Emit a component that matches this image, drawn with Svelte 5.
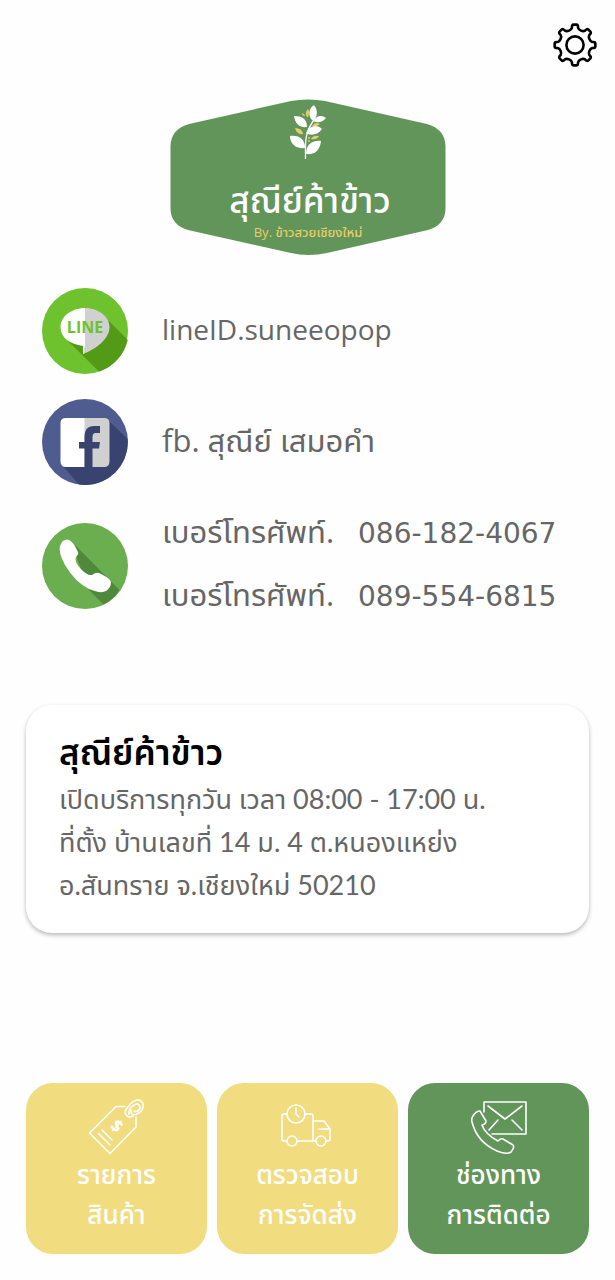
<script>
  const point = (radius, degrees) => {
    const a = ((degrees - 90) * Math.PI) / 180;
    return `${(24 + radius * Math.cos(a)).toFixed(2)} ${(24 + radius * Math.sin(a)).toFixed(2)}`;
  };

  // Eight rounded teeth joined by concave notches.
  const gearPath =
    Array.from({ length: 8 }, (_, i) => {
      const a = i * 45;
      return `${i ? 'L' : 'M'}${point(17.5, a - 10)} Q${point(20.6, a - 9)} ${point(20.4, a - 4)} L${point(20.4, a + 4)} Q${point(20.6, a + 9)} ${point(17.5, a + 10)} C${point(15.2, a + 14)} ${point(15.2, a + 31)} ${point(17.5, a + 35)}`;
    }).join(' ') + 'Z';

  const phones = ['086-182-4067', '089-554-6815'];

  const tabs = [
    { icon: 'tag', lines: ['รายการ', 'สินค้า'], active: false },
    { icon: 'truck', lines: ['ตรวจสอบ', 'การจัดส่ง'], active: false },
    { icon: 'contact', lines: ['ช่องทาง', 'การติดต่อ'], active: true }
  ];
</script>

<div class="page">
  <header>
    <button class="settings" type="button" aria-label="ตั้งค่า">
      <svg viewBox="0 0 48 48" fill="none" stroke="#000" stroke-width="2.6" stroke-linejoin="round">
        <path d={gearPath} />
        <circle cx="24" cy="24" r="8.6" />
      </svg>
    </button>
  </header>

  <svg class="logo" viewBox="0 0 276 158">
    <path fill="#62955a" d="M19 25 L121 2 Q138 -1 155 2 L257 25 Q275 30 275.500 47 L275.500 110 Q275 126 258 131 L157 154 Q138 158 121 154 L18 131 Q1 126 .5 110 L.5 47 Q1 30 19 25Z" />
    <g fill="#fff">
      <path d="M135.500 60 C135.500 45 134 34 144 21" fill="none" stroke="#fff" stroke-width="1.300" />
      <path d="M143 22 C137 17 139 9 144 6 C148 11 148 18 143 22Z" />
      <path d="M143 22 C147 16 152 16 156 19 C152 24 147 24 143 22Z" />
      <path d="M137 28 C129 29 125 24 124 17 C132 17 137 20 137 28Z" />
      <path d="M136 34 C141 25 148 26 152 30 C148 36 141 37 136 34Z" />
      <path d="M135 49 C126 50 120 45 120 37 C130 36 135 41 135 49Z" />
      <path d="M136 55 C136 46 142 41 151 42 C150 51 145 56 136 55Z" />
    </g>
    <g fill="#e8cd69">
      <path d="M137 18 Q134 14 138 10 Q140 13 138 18Z" />
      <path d="M135 17 Q132 17 132 14 Q135 15 135 17Z" />
      <path d="M142 27 Q145 22 150 25 Q147 28 142 27Z" />
      <path d="M133 35 Q127 36 125 29 Q132 29 133 35Z" />
      <path d="M141 40 Q143 36 149 37 Q147 41 141 40Z" />
      <circle cx="139" cy="39" r="1" />
      <circle cx="139" cy="42" r="1" />
    </g>
    <text class="logo-name" x="140" y="114">สุณีย์ค้าข้าว</text>
    <text class="logo-by" x="138" y="138">By. ข้าวสวยเชียงใหม่</text>
  </svg>

  <ul class="contacts">
    <li>
      <svg class="badge" viewBox="0 0 86 86">
        <circle cx="43" cy="43" r="43" fill="#6ec22e" />
        <path fill="#539a17" d="M67 33 L85.700 52 A43 43 0 0 1 57 83.600 L25 52Z" />
        <path fill="#fff" d="M43 20 C29 20 18.500 29 18.500 39 C18.500 50 28 56 41 58 L41 66 L43 65Z" />
        <path fill="#d0d0d0" d="M43 20 C57 20 67.500 29 67.500 39 C67.500 51 54 61 41 66 L43 57Z" />
        <text class="line-word" x="43" y="45">LINE</text>
      </svg>
      <p class="latin">lineID.suneeopop</p>
    </li>
    <li>
      <svg class="badge" viewBox="0 0 86 86">
        <circle cx="43" cy="43" r="43" fill="#4f5c8f" />
        <path fill="#38436f" d="M66 21 L85.500 40 A43 43 0 0 1 37 85.600 L20 66Z" />
        <path fill="#fff" d="M43 19 H24 Q18.500 19 18.500 24 V62 Q18.500 68 24 68 H43Z" />
        <path fill="#d0d0d0" d="M42.500 19 H62 Q67.500 19 67.500 24 V62 Q67.500 68 62 68 H42.500Z" />
        <path fill="#38436f" d="M42.500 68 V49.500 H37 V43 H42.500 V38 Q42.500 27 52 27 H58 V34 H53.500 Q50.500 34 50.500 38 V43 H58 L57 49.500 H50.500 V68Z" />
      </svg>
      <p>fb. สุณีย์ เสมอคำ</p>
    </li>
    <li>
      <svg class="badge" viewBox="0 0 86 86">
        <circle cx="43" cy="43" r="43" fill="#6aae50" />
        <path fill="#4e8a39" d="M29 18 L77.500 67 Q71 77 61.500 81.500 L46 66Z" />
        <path fill="#fff" d="M18 23 Q21 15 27 17 Q31 18 36 29 Q37 31 34 34 Q32 38 38 45 Q45 53 50 52 Q54 49 57 50 Q68 55 69 59 Q69 65 64 68 Q59 71 47 66 Q33 59 23 42 Q16 29 18 23Z" />
      </svg>
      <dl>
        {#each phones as phone}
          <div>
            <dt>เบอร์โทรศัพท์.</dt>
            <dd>{phone}</dd>
          </div>
        {/each}
      </dl>
    </li>
  </ul>

  <section class="card">
    <h1>สุณีย์ค้าข้าว</h1>
    <p>เปิดบริการทุกวัน เวลา 08:00 - 17:00 น.</p>
    <p>ที่ตั้ง บ้านเลขที่ 14 ม. 4 ต.หนองแหย่ง</p>
    <p>อ.สันทราย จ.เชียงใหม่ 50210</p>
  </section>

  <nav>
    {#each tabs as tab}
      <button type="button" class="tab" class:active={tab.active}>
        <svg viewBox="0 0 60 58" fill="none" stroke="currentColor" stroke-width="1.600" stroke-linejoin="round" stroke-linecap="round">
          {#if tab.icon === 'tag'}
            <path d="M38 8.500 H29 L2.500 35 L23 55.500 L49 29 V19" />
            <path d="M15 32 L25 42 M11.500 35.500 L23 47" />
            <path d="M46 18 C40 21 36 15 40 10 C44 4 50 0 54 3 C59 7 55 14 50 16 C46 18 43 15 44 12" />
            <path d="M42 16 C41 11 48 4 52 7 C55 10 50 15 47 13" />
            <text class="dollar" x="30" y="34" transform="rotate(42 30 28)">$</text>
          {:else if tab.icon === 'truck'}
            <circle cx="18" cy="16" r="9" />
            <path d="M18 10 V16 L21 19" />
            <path d="M9 16 H6 Q4 16 4 18 V41 Q4 43 6 43 H9 M19 43 H38 M27 16 H33 Q35 16 35 18 V43 M35 23 H46 L52 31 V41 Q52 43 50 43 H48 M41 31 H52" />
            <circle cx="14" cy="43" r="5" />
            <circle cx="43" cy="43" r="5" />
          {:else}
            <path d="M15 14 V4 H57 V36 H23" />
            <path d="M19 8 L36 21 L53 8 M20 32 L29 22 M43 22 L53 32" />
            <path d="M4 18 Q7 13 11 13 L17 23 Q17 26 13 27 Q16 36 29 43 Q32 40 34 41 L44 47 Q46 49 42 54 Q38 57 28 53 Q8 44 3 24 Q2 21 4 18Z" />
          {/if}
        </svg>
        {#each tab.lines as line}
          <span>{line}</span>
        {/each}
      </button>
    {/each}
  </nav>
</div>

<style>
  :global(body) {
    margin: 0;
    background: #fefefe;
  }
  .page {
    min-height: 100vh;
    box-sizing: border-box;
    padding: 21px 26px 26px;
    display: flex;
    flex-direction: column;
    font-family: 'Open Sans', 'Noto Sans Thai', 'Noto Sans', sans-serif;
    color: #666;
  }
  p,
  h1,
  dl,
  dd,
  ul {
    margin: 0;
    padding: 0;
  }
  header {
    display: flex;
    justify-content: flex-end;
    margin-right: -10px;
  }
  button {
    border: 0;
    padding: 0;
    background: none;
    font: inherit;
  }
  .settings {
    width: 48px;
    height: 48px;
  }
  .settings svg {
    display: block;
  }
  .logo {
    width: 276px;
    height: 158px;
    margin-top: 30px;
    align-self: center;
  }
  .logo-name,
  .logo-by {
    text-anchor: middle;
    fill: #fff;
    font-size: 35px;
    font-weight: 500;
  }
  .logo-by {
    fill: #e8cd69;
    font-size: 13px;
  }
  .contacts {
    list-style: none;
    margin: 31px 0 0 16px;
    display: flex;
    flex-direction: column;
    gap: 25px;
  }
  li {
    display: flex;
    align-items: center;
    gap: 34px;
    font-size: 31px;
    line-height: 42px;
  }
  li p,
  dl {
    padding-bottom: 4px;
  }
  .latin {
    font-size: 28px;
  }
  .badge {
    width: 86px;
    height: 86px;
    flex: none;
  }
  .line-word {
    fill: #6ec22e;
    font: 700 16px 'Open Sans', sans-serif;
    text-anchor: middle;
  }
  dl {
    display: flex;
    flex-direction: column;
    gap: 18px;
  }
  dl div {
    display: flex;
    align-items: baseline;
    gap: 24px;
  }
  dd {
    font-family: 'DejaVu Sans', sans-serif;
    font-size: 28px;
  }
  .card {
    margin-top: 83px;
    padding: 21px 33px 27px;
    border-radius: 26px;
    background: #fff;
    box-shadow: 0 2px 4px rgb(0 0 0 / 28%);
  }
  h1 {
    color: #000;
    font-size: 35px;
    line-height: 51px;
    font-weight: 600;
  }
  .card p {
    font-family: Lato, 'Noto Sans Thai', sans-serif;
    font-size: 27px;
    line-height: 43px;
  }
  nav {
    margin-top: auto;
    display: grid;
    grid-template-columns: repeat(3, 1fr);
    gap: 10px;
  }
  .tab {
    display: flex;
    flex-direction: column;
    align-items: center;
    padding: 15px 0 20px;
    border-radius: 27px;
    background: #f1dc80;
    color: #fff;
    font-size: 26px;
    font-weight: 500;
    line-height: 40px;
  }
  .tab svg {
    width: 60px;
    height: 58px;
    margin-bottom: -2px;
  }
  .tab.active {
    background: #62955a;
  }
  .dollar {
    fill: currentColor;
    stroke: none;
    font: 700 17px 'Open Sans', sans-serif;
    text-anchor: middle;
  }
</style>
